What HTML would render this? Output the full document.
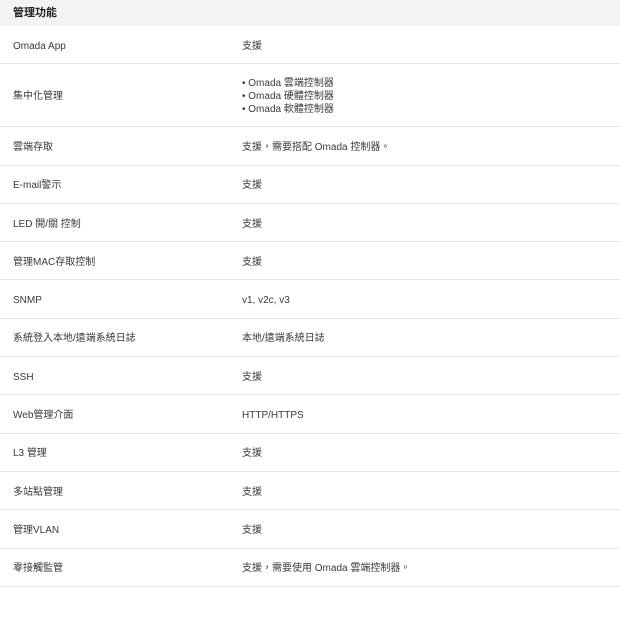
<!DOCTYPE html>
<html><head><meta charset="utf-8"><style>
body{margin:0;background:#fff;font-family:"Liberation Sans","Noto Sans CJK TC",sans-serif;font-size:10px;color:#3a3a3a;}
.h{height:26px;background:#f3f3f3;font-weight:bold;font-size:11px;line-height:26px;padding-left:13px;color:#222}
.r{display:flex;align-items:center;height:37.3px;border-bottom:1px solid #e8e8e8;}
.r div{line-height:13px;height:13px;overflow:visible;position:relative;top:1.5px}
.r div:first-child{width:229px;padding-left:13px}
.r.t{height:62px}
.r.t div:last-child{height:39px}
</style></head><body>
<div class="h">管理功能</div>
<div class="r"><div>Omada App</div><div>支援</div></div>
<div class="r t"><div>集中化管理</div><div>• Omada 雲端控制器<br>• Omada 硬體控制器<br>• Omada 軟體控制器</div></div>
<div class="r"><div>雲端存取</div><div>支援，需要搭配 Omada 控制器。</div></div>
<div class="r"><div>E-mail警示</div><div>支援</div></div>
<div class="r"><div>LED 開/關 控制</div><div>支援</div></div>
<div class="r"><div>管理MAC存取控制</div><div>支援</div></div>
<div class="r"><div>SNMP</div><div>v1, v2c, v3</div></div>
<div class="r"><div>系統登入本地/遠端系統日誌</div><div>本地/遠端系統日誌</div></div>
<div class="r"><div>SSH</div><div>支援</div></div>
<div class="r"><div>Web管理介面</div><div>HTTP/HTTPS</div></div>
<div class="r"><div>L3 管理</div><div>支援</div></div>
<div class="r"><div>多站點管理</div><div>支援</div></div>
<div class="r"><div>管理VLAN</div><div>支援</div></div>
<div class="r"><div>零接觸監管</div><div>支援，需要使用 Omada 雲端控制器。</div></div>
</body></html>
